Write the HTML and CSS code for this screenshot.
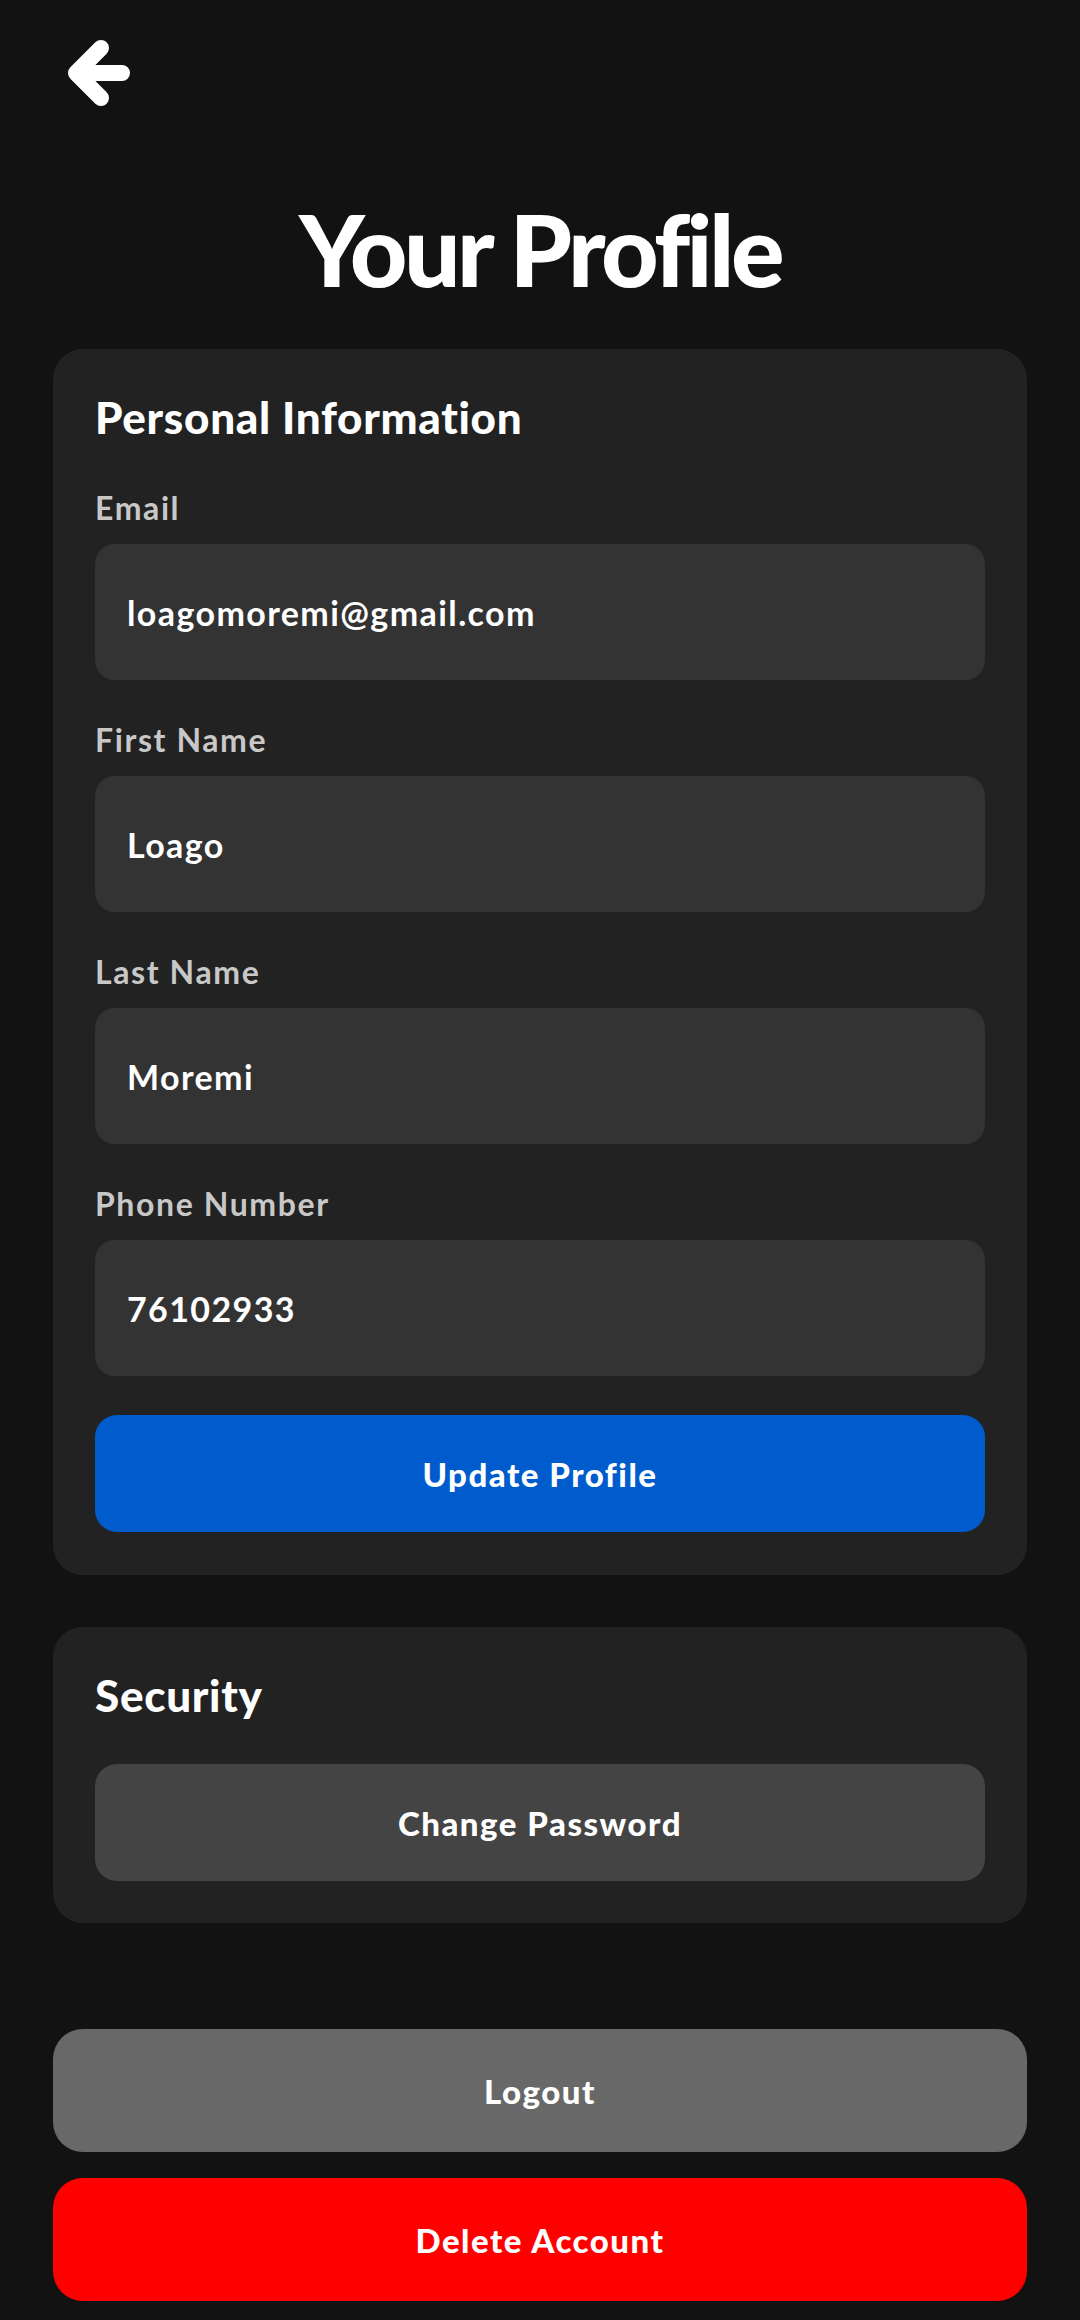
FILE: index.html
```html
<!DOCTYPE html>
<html lang="en">
<head>
<meta charset="utf-8">
<title>Your Profile</title>
<link rel="stylesheet" href="styles.css">
</head>
<body>
<div class="page">
  <div class="topbar">
    <svg class="back" width="75" height="77" viewBox="0 0 75 77" aria-label="Back">
      <path d="M16 38 H62 M41 13 L16 38 L41 63" fill="none" stroke="#ffffff" stroke-width="16" stroke-linecap="round" stroke-linejoin="round"/>
    </svg>
  </div>
  <h1 class="title">Your Profile</h1>

  <section class="card">
    <h2 class="card-title">Personal Information</h2>
    <div class="field">
      <label class="label">Email</label>
      <input class="input" type="text" value="loagomoremi@gmail.com">
    </div>
    <div class="field">
      <label class="label">First Name</label>
      <input class="input" type="text" value="Loago">
    </div>
    <div class="field">
      <label class="label">Last Name</label>
      <input class="input" type="text" value="Moremi">
    </div>
    <div class="field">
      <label class="label">Phone Number</label>
      <input class="input" type="text" value="76102933">
    </div>
    <button class="btn btn-primary">Update Profile</button>
  </section>

  <section class="card card-security">
    <h2 class="card-title">Security</h2>
    <button class="btn btn-secondary">Change Password</button>
  </section>

  <div class="actions">
    <button class="btn btn-big btn-logout">Logout</button>
    <button class="btn btn-big btn-delete">Delete Account</button>
  </div>
</div>
</body>
</html>
```
FILE: styles.css
```css
* { box-sizing: border-box; }
html, body {
  margin: 0;
  padding: 0;
  background: #121212;
}
body {
  font-family: Lato, "Noto Sans", "Liberation Sans", sans-serif;
  color: #ffffff;
}
.page {
  min-height: 2320px;
  padding: 0 53px;
}
.topbar {
  padding-top: 35px;
  padding-left: 7px;
  height: 112px;
}
.back { display: block; }
.title {
  margin: 86px 0 51px;
  font-size: 100px;
  line-height: 100px;
  font-weight: 900;
  letter-spacing: -3.5px;
  text-align: center;
}
.card {
  background: #222222;
  border-radius: 30px;
  padding: 42px 42px 43px;
}
.card-title {
  margin: 0 0 45px;
  font-size: 44px;
  line-height: 52px;
  font-weight: 900;
  letter-spacing: 0.7px;
}
.field {
  display: flex;
  flex-direction: column;
  margin-bottom: 40px;
}
.field:nth-last-of-type(1) { margin-bottom: 0; }
.label {
  font-size: 32px;
  line-height: 40px;
  font-weight: 700;
  color: #c8c8c8;
  letter-spacing: 1.6px;
  margin-bottom: 16px;
}
.input {
  height: 136px;
  width: 100%;
  border: none;
  outline: none;
  border-radius: 20px;
  background: #333333;
  color: #ffffff;
  font: inherit;
  font-size: 34px;
  font-weight: 700;
  letter-spacing: 1.4px;
  padding: 0 32px;
}
.btn {
  display: block;
  width: 100%;
  border: none;
  color: #ffffff;
  font-family: inherit;
  font-size: 33px;
  font-weight: 900;
  letter-spacing: 1.5px;
  text-align: center;
  cursor: pointer;
}
.btn-primary {
  margin-top: 39px;
  height: 117px;
  border-radius: 22px;
  background: #005bcc;
}
.card-security {
  margin-top: 52px;
  padding-bottom: 42px;
}
.card-security .card-title { margin-bottom: 43px; }
.btn-secondary {
  height: 117px;
  border-radius: 22px;
  background: #444444;
}
.actions {
  margin-top: 106px;
  display: flex;
  flex-direction: column;
  gap: 26px;
}
.btn-big {
  height: 123px;
  border-radius: 30px;
}
.btn-logout { background: #686868; }
.btn-delete { background: #ff0000; }
```
